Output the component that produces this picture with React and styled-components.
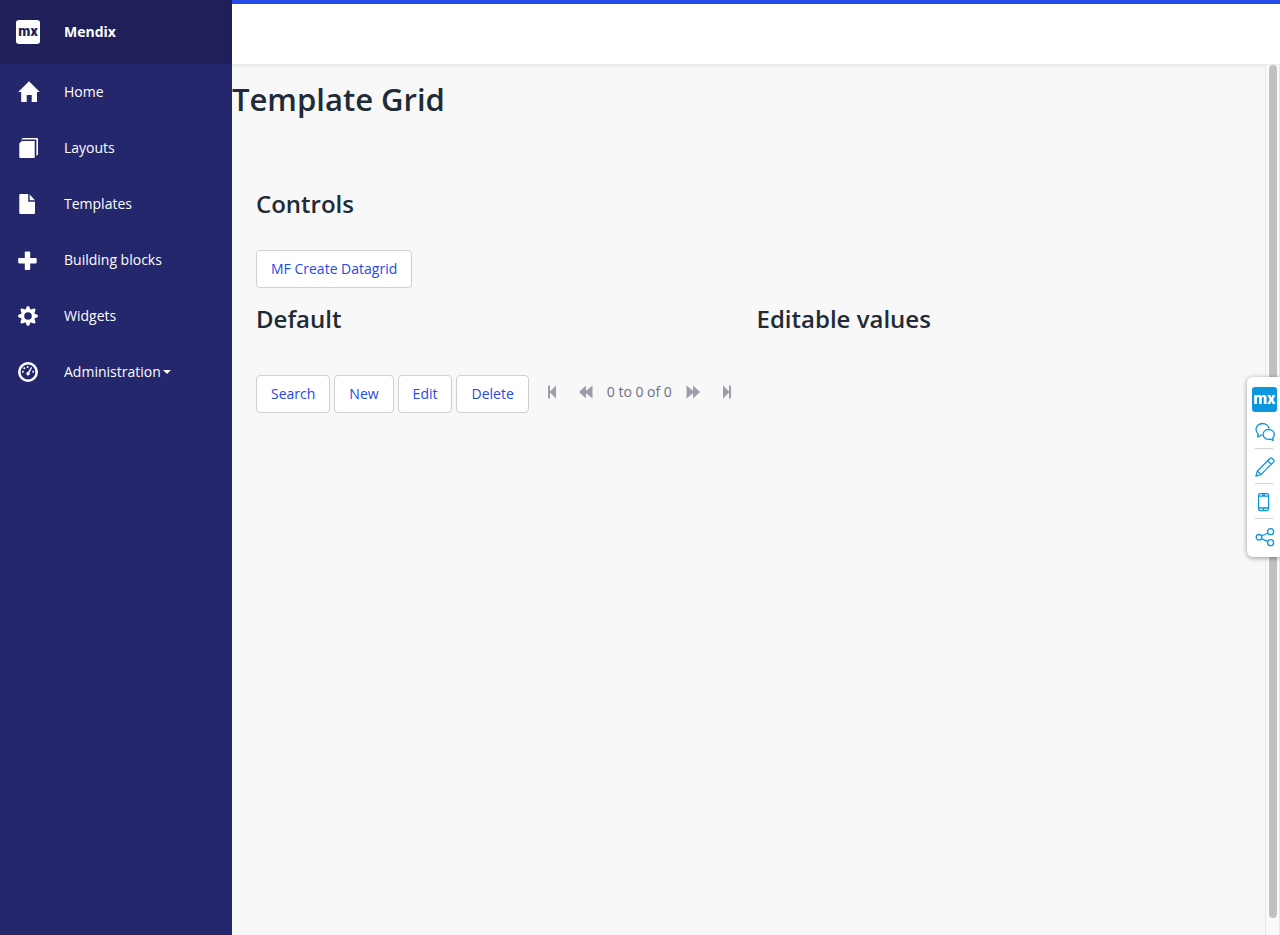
import React from "react";
import styled, { createGlobalStyle, css } from "styled-components";

const GlobalStyle = createGlobalStyle`
  *, *::before, *::after { box-sizing: border-box; }
  body {
    margin: 0;
    background: #f8f8f8;
    color: #6c7180;
    font: 14px/20px "Open Sans", sans-serif;
  }
  button { font: inherit; cursor: pointer; }
  h1, h2 { margin: 0; color: #202b37; font-weight: 600; }
`;

const Page = styled.div`
  display: flex;
  min-height: 100vh;
`;

const Sidebar = styled.aside`
  flex: 0 0 232px;
  background: #24276c;
  color: #fff;
`;

const Brand = styled.a`
  display: flex;
  align-items: center;
  gap: 24px;
  height: 64px;
  padding: 0 16px;
  background: #1f2059;
  color: #fff;
  font-weight: 700;
  text-decoration: none;
`;

const Logo = styled.span`
  display: flex;
  align-items: center;
  justify-content: center;
  flex: none;
  width: ${(p) => p.$size}px;
  height: ${(p) => p.$size}px;
  padding-bottom: 2px;
  border-radius: 3px;
  background: ${(p) => p.$background};
  color: ${(p) => p.$color};
  font: 900 ${(p) => p.$font}px/20px Roboto, sans-serif;
`;

const navItem = css`
  display: flex;
  align-items: center;
  gap: 24px;
  width: 100%;
  height: 56px;
  padding: 0 16px;
  border: 0;
  background: none;
  color: #fff;
  text-decoration: none;
`;

const NavLink = styled.a`${navItem}`;
const NavButton = styled.button`${navItem}`;

const NavLabel = styled.span`
  display: flex;
  align-items: center;
  gap: 2px;
`;

const Caret = styled.span`
  border: 4px solid transparent;
  border-top-color: currentColor;
  border-bottom: 0;
`;

const NavIcon = styled.svg`
  flex: none;
  width: 24px;
  height: 24px;
  fill: currentColor;
`;

const Body = styled.div`
  flex: 1;
  display: flex;
  flex-direction: column;
  min-width: 0;
`;

const Topbar = styled.header`
  height: 65px;
  border-top: 4px solid #264ae5;
  border-bottom: 1px solid #ececec;
  background: #fff;
  box-shadow: 0 1px 3px rgba(0, 0, 0, 0.08);
`;

const Scroller = styled.div`
  flex: 1;
  display: flex;
`;

const Content = styled.main`
  flex: 1;
  min-width: 0;
`;

const ScrollTrack = styled.div`
  display: flex;
  width: 15px;
  padding: 0 2px 17px 3px;
  border: 1px solid #e6e6e6;
  border-width: 0 1px;
  background: #fafafa;
`;

const ScrollThumb = styled.div`
  flex: 1;
  border-radius: 4px;
  background: #c1c1c1;
`;

const PageTitle = styled.h1`
  padding: 12px 0 66px;
  font-size: 31px;
  line-height: 44px;
`;

const Section = styled.section`
  padding: 0 24px 14px;
`;

const SectionTitle = styled.h2`
  margin-bottom: ${(p) => p.$space}px;
  font-size: 24px;
  line-height: 34px;
`;

const Columns = styled.div`
  display: grid;
  grid-template-columns: repeat(2, minmax(0, 1fr));
  gap: 16px;
  padding: 0 24px;
`;

const GridToolbar = styled.div`
  display: flex;
  align-items: flex-start;
  gap: 4px;
  white-space: nowrap;
`;

const Button = styled.button`
  height: 38px;
  padding: 0 14px;
  border: 1px solid #ced0d3;
  border-radius: 4px;
  background: #fff;
  color: #264ae5;
`;

const Pager = styled.div`
  display: flex;
  align-items: center;
  height: 34px;
  margin-left: 2px;
`;

const PagerButton = styled.button`
  display: flex;
  align-items: center;
  justify-content: center;
  width: 34px;
  height: 34px;
  padding: 0;
  border: 0;
  background: none;
  color: #9b9dab;

  svg { fill: currentColor; }
`;

const PagerStatus = styled.span`
  padding: 0 4px;
`;

const FeedbackBar = styled.aside`
  position: fixed;
  top: 377px;
  right: 0;
  width: 33px;
  padding: 10px 3px 3px 5px;
  border-radius: 6px 0 0 6px;
  background: #fff;
  box-shadow: 0 1px 5px rgba(0, 0, 0, 0.4);
`;

const FeedbackList = styled.ul`
  margin: 2px 4px 0 3px;
  padding: 0;
  list-style: none;
`;

const FeedbackItem = styled.li`
  height: 35px;
  border-bottom: 1px solid #d3d3d3;

  &:last-child { border-bottom-color: transparent; }
`;

const FeedbackButton = styled.button`
  display: flex;
  align-items: center;
  width: 20px;
  height: 34px;
  padding: 2px 0 0;
  border: 0;
  background: none;
  color: #0c96dd;

  svg {
    flex: none;
    fill: none;
    stroke: currentColor;
    stroke-width: 1.3;
    stroke-linejoin: round;
  }
`;

const toothAngles = [0, 45, 90, 135, 180, 225, 270, 315];

const navIcons = {
  home: <path d="M13 1.2 23.8 12H21v10h-5.3v-7h-5v7H5.2V12H2.2z" />,
  layouts: (
    <>
      <path d="M3.3 7.500 5.800 5H18.700v17H4.300a1 1 0 0 1-1-1z" />
      <path d="M5 3.600 6.700 2H21a1 1 0 0 1 1 1v15.400L20.400 20V3.600z" />
    </>
  ),
  templates: (
    <>
      <path d="M4.300 2h7.900v7.800H19V21a1 1 0 0 1-1 1H4.300a1 1 0 0 1-1-1V3a1 1 0 0 1 1-1z" />
      <path d="M13.700 2.600v5.600H19z" />
    </>
  ),
  blocks: <path d="M9.600 3.500h3.800a.8.8 0 0 1 .8.8V10h5.700a.8.8 0 0 1 .8.8v3.800a.8.8 0 0 1-.8.8h-5.700v5.800a.8.8 0 0 1-.8.8H9.600a.8.8 0 0 1-.8-.8v-5.800H3a.8.8 0 0 1-.8-.8v-3.800A.8.8 0 0 1 3 10h5.800V4.300a.8.8 0 0 1 .8-.8z" />,
  widgets: (
    <>
      <circle cx="12" cy="12" r="5.500" fill="none" stroke="currentColor" strokeWidth="3.400" />
      {toothAngles.map((a) => (
        <path key={a} d="M9.600 5.600 11 2.200h2l1.400 3.400z" transform={`rotate(${a} 12 12)`} />
      ))}
    </>
  ),
  administration: (
    <>
      <circle cx="12" cy="12" r="8.700" fill="none" stroke="currentColor" strokeWidth="2.600" />
      <circle cx="6.900" cy="11.800" r="1" />
      <circle cx="8.300" cy="8.300" r="1" />
      <circle cx="11.600" cy="7" r="1" />
      <circle cx="17.100" cy="11.800" r="1" />
      <path d="m15.200 7 1 .5-2.700 5.300a1.700 1.700 0 1 1-1.500-.8z" />
    </>
  ),
};

const pages = [
  ["home", "Home"],
  ["layouts", "Layouts"],
  ["templates", "Templates"],
  ["blocks", "Building blocks"],
  ["widgets", "Widgets"],
];

const pagerPaths = {
  first: "M3 .5h2v6L11 .5v13L5 7.500v6H3z",
  previous: "M7 .5v5.300L13.500 .5v13L7 8.200v5.300L0 7z",
  next: "M.5 .5 7 5.800V.5l7 6.500-7 6.500V8.200L.5 13.500z",
  last: "M3 .5 9 6.500v-6h2v13H9v-6l-6 6z",
};

const feedbackTools = [
  [
    "Comments",
    <>
      <path d="M7.500 13.200H6.500L2.600 15l.7-3A5.600 5.600 0 0 1 1 7.600C1 4.200 4 1.500 7.600 1.500c3.300 0 6 2.200 6.500 5.100" />
      <path d="M13.700 7.500c3.200 0 5.600 2.100 5.600 4.900 0 1.400-.6 2.700-1.600 3.500l.6 2.600-3-1.300c-4.100.7-7.200-1.700-7.200-4.800 0-2.800 2.400-4.900 5.600-4.900z" />
    </>,
  ],
  [
    "Annotate",
    <>
      <path d="M.9 19.100 2.400 14 14.900 1.500a1.700 1.700 0 0 1 2.400 0l1.200 1.200a1.700 1.700 0 0 1 0 2.400L6 17.600z" />
      <path d="m2.400 14 3.600 3.600M12.700 3.700l3.600 3.600" />
    </>,
  ],
  [
    "Mobile view",
    <>
      <rect x="3.600" y="1.600" width="10" height="17" rx="1.500" />
      <path d="M3.600 4.100h10M3.600 16h10M7 2.800h3.200M8 17.400h1.200" />
    </>,
  ],
  [
    "Share",
    <>
      <circle cx="4" cy="10.300" r="2.800" />
      <circle cx="15.600" cy="4.700" r="3" />
      <circle cx="15.600" cy="15.700" r="3" />
      <path d="m6.500 9 6.400-3M6.500 11.600l6.400 3" />
    </>,
  ],
];

function PagerControl({ label, icon }) {
  return (
    <PagerButton type="button" aria-label={label}>
      <svg width="14" height="14" viewBox="0 0 14 14" aria-hidden="true">
        <path d={pagerPaths[icon]} />
      </svg>
    </PagerButton>
  );
}

export default function App() {
  return (
    <>
      <GlobalStyle />
      <Page>
        <Sidebar>
          <Brand href="#home">
            <Logo $size={24} $font={14} $background="#fff" $color="#1f2059">mx</Logo>
            Mendix
          </Brand>
          <nav>
            {pages.map(([icon, label]) => (
              <NavLink key={icon} href={`#${icon}`}>
                <NavIcon viewBox="0 0 24 24" aria-hidden="true">{navIcons[icon]}</NavIcon>
                <NavLabel>{label}</NavLabel>
              </NavLink>
            ))}
            <NavButton type="button">
              <NavIcon viewBox="0 0 24 24" aria-hidden="true">{navIcons.administration}</NavIcon>
              <NavLabel>Administration<Caret /></NavLabel>
            </NavButton>
          </nav>
        </Sidebar>
        <Body>
          <Topbar />
          <Scroller>
            <Content>
              <PageTitle>Template Grid</PageTitle>
              <Section>
                <SectionTitle $space={29}>Controls</SectionTitle>
                <Button type="button">MF Create Datagrid</Button>
              </Section>
              <Columns>
                <section>
                  <SectionTitle $space={39}>Default</SectionTitle>
                  <GridToolbar>
                    <Button type="button">Search</Button>
                    <Button type="button">New</Button>
                    <Button type="button">Edit</Button>
                    <Button type="button">Delete</Button>
                    <Pager>
                      <PagerControl label="First page" icon="first" />
                      <PagerControl label="Previous page" icon="previous" />
                      <PagerStatus>0 to 0 of 0</PagerStatus>
                      <PagerControl label="Next page" icon="next" />
                      <PagerControl label="Last page" icon="last" />
                    </Pager>
                  </GridToolbar>
                </section>
                <section>
                  <SectionTitle $space={39}>Editable values</SectionTitle>
                </section>
              </Columns>
            </Content>
            <ScrollTrack aria-hidden="true">
              <ScrollThumb />
            </ScrollTrack>
          </Scroller>
        </Body>
      </Page>
      <FeedbackBar aria-label="Feedback">
        <Logo $size={25} $font={16} $background="#0c96dd" $color="#fff">mx</Logo>
        <FeedbackList>
          {feedbackTools.map(([label, drawing]) => (
            <FeedbackItem key={label}>
              <FeedbackButton type="button" aria-label={label}>
                <svg width="20" height="20" viewBox="0 0 20 20" aria-hidden="true">{drawing}</svg>
              </FeedbackButton>
            </FeedbackItem>
          ))}
        </FeedbackList>
      </FeedbackBar>
    </>
  );
}
